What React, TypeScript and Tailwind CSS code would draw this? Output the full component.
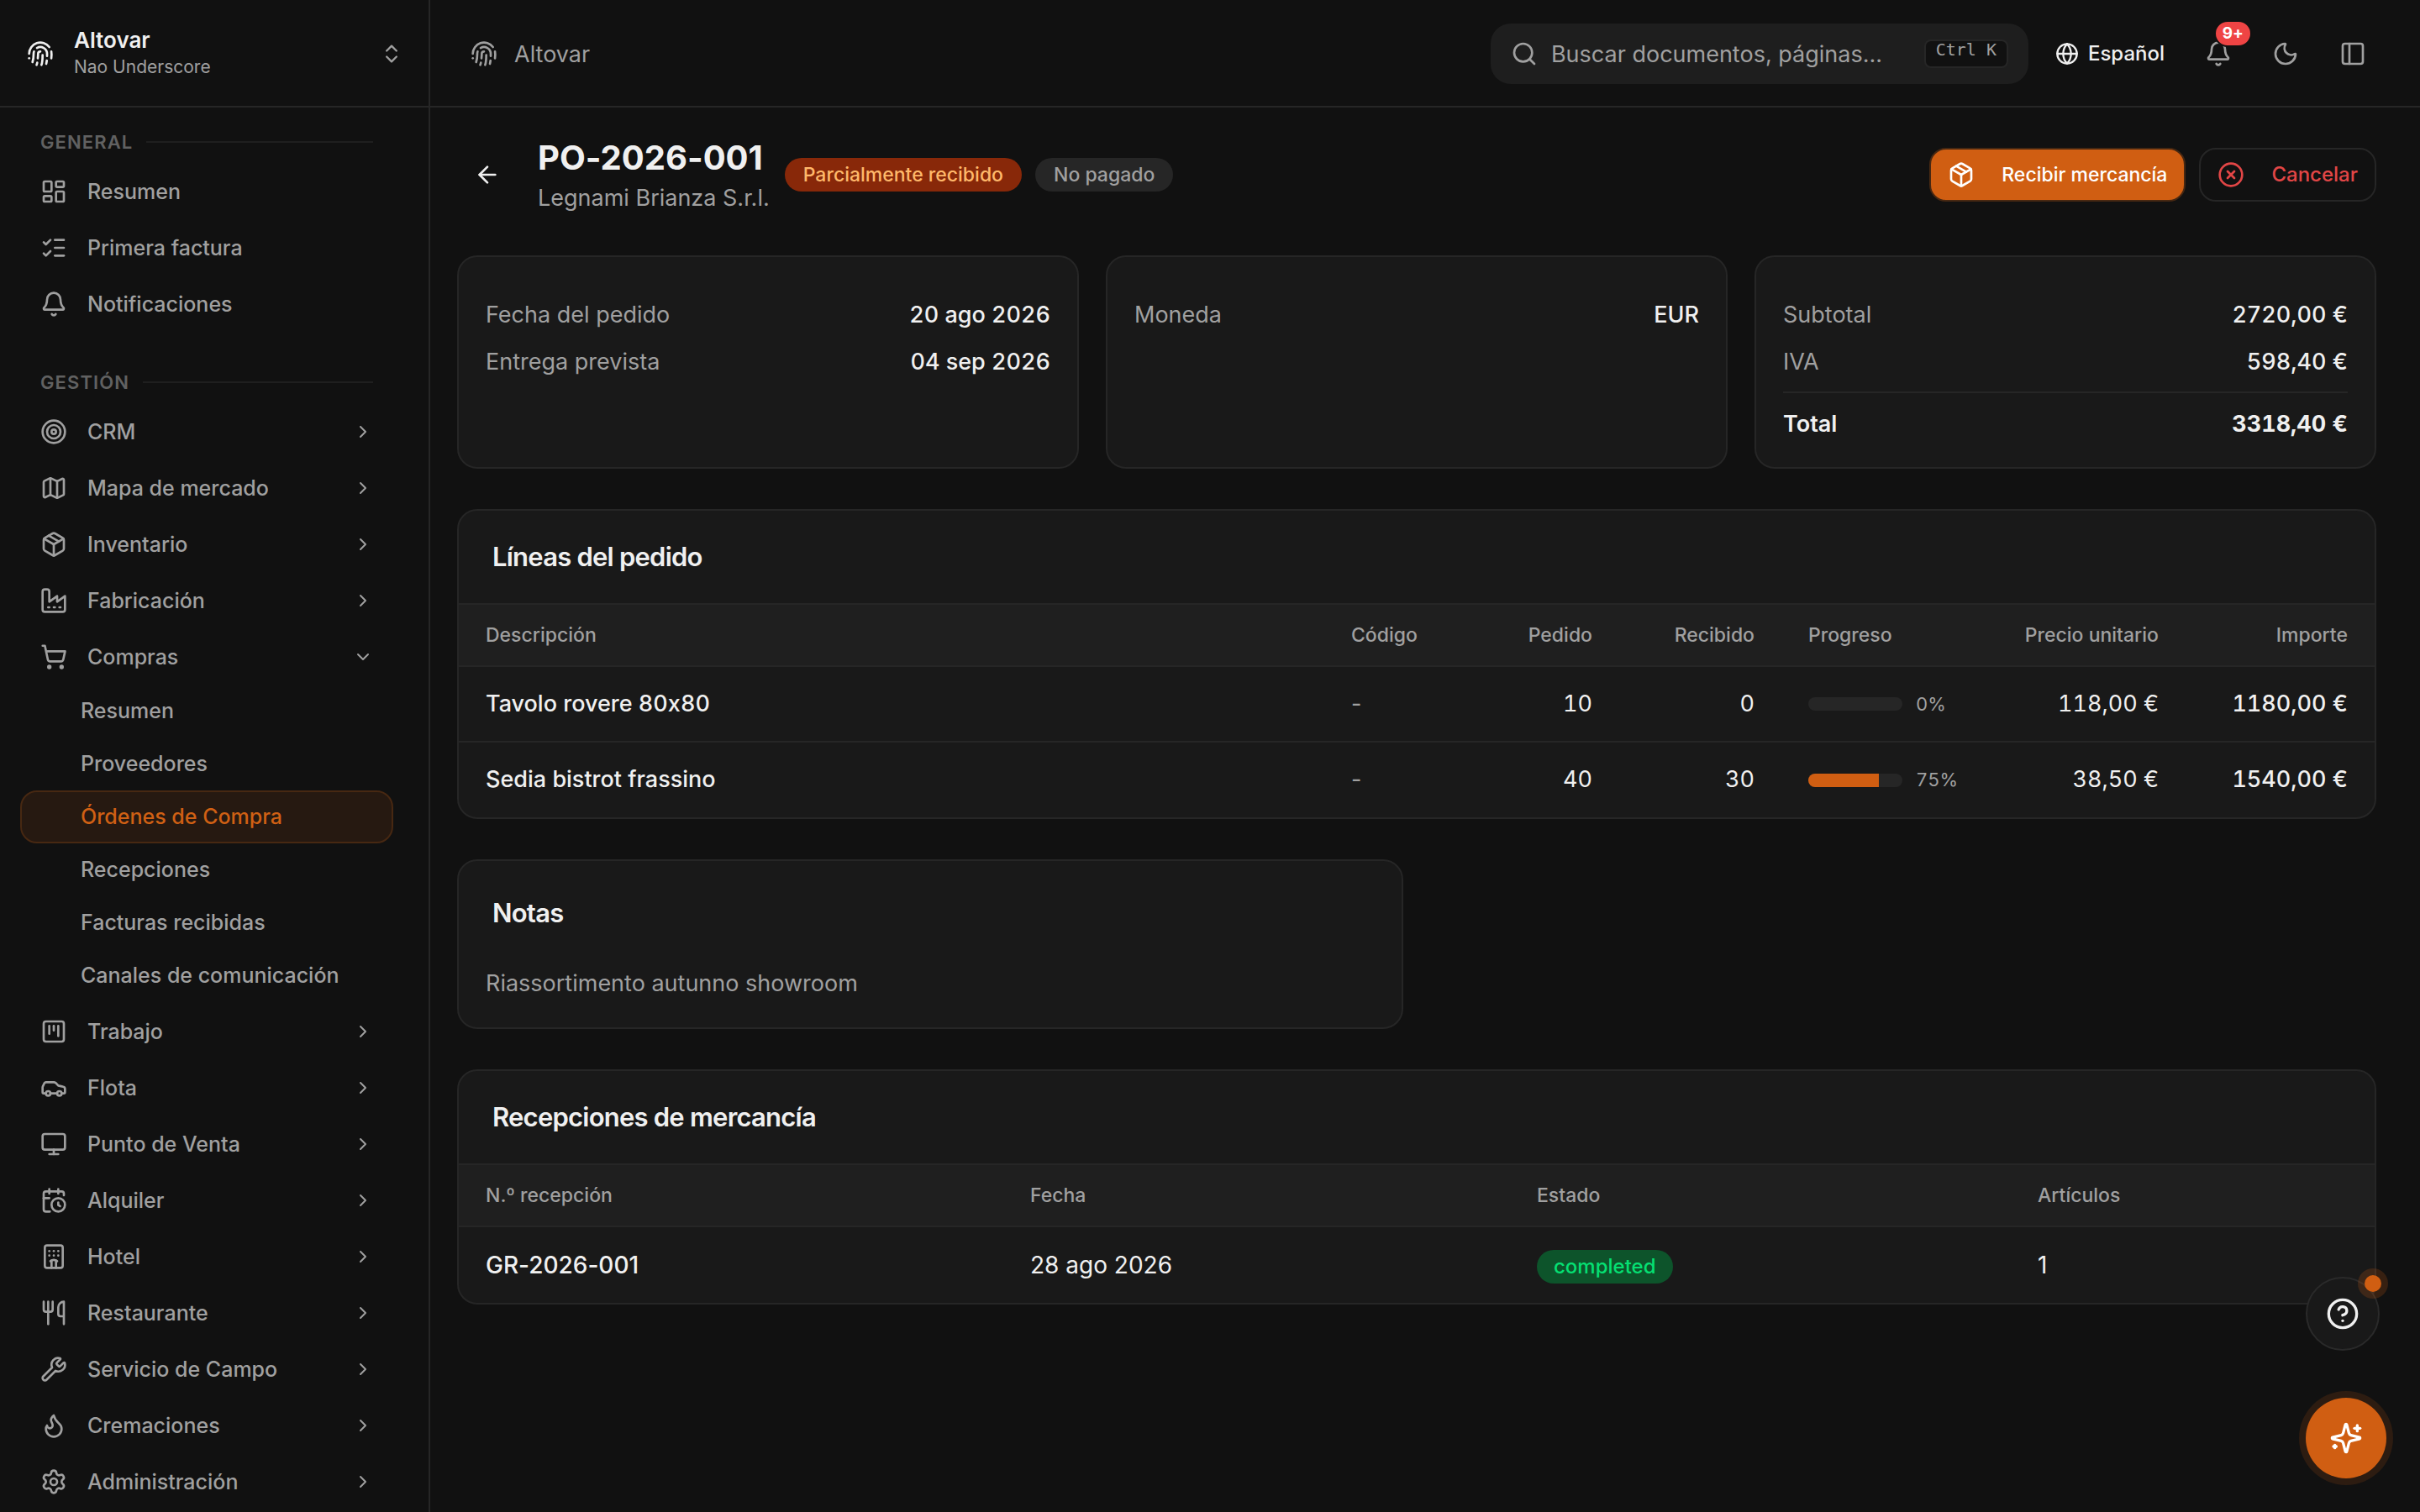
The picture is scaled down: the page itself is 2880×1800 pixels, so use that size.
import type { ReactNode } from "react";
import {
  ArrowLeft,
  Bell,
  CalendarClock,
  Car,
  ChevronDown,
  ChevronRight,
  ChevronsUpDown,
  CircleHelp,
  CircleX,
  Flame,
  Globe,
  Hotel,
  LayoutDashboard,
  ListChecks,
  Map,
  Monitor,
  Moon,
  Package,
  PanelLeft,
  Search,
  Settings,
  ShoppingCart,
  SquareKanban,
  Target,
  Utensils,
  Wrench,
} from "lucide-react";

type Icon = (props: { className?: string }) => ReactNode;

interface NavEntry {
  label: string;
  icon: Icon | typeof Bell;
  expandable?: boolean;
  children?: string[];
}

function Glyph({
  children,
  className,
}: {
  children: ReactNode;
  className?: string;
}) {
  return (
    <svg
      viewBox="0 0 24 24"
      fill="none"
      stroke="currentColor"
      strokeWidth="2"
      strokeLinecap="round"
      strokeLinejoin="round"
      className={className}
      aria-hidden="true"
    >
      {children}
    </svg>
  );
}

function Fingerprint({ className }: { className?: string }) {
  return (
    <Glyph className={className}>
      <path d="M12 10a2 2 0 0 0-2 2c0 1.02-.1 2.51-.26 4" />
      <path d="M14 13.12c0 2.38 0 6.38-1 8.88" />
      <path d="M17.29 21.02c.12-.6.43-2.3.5-3.02" />
      <path d="M2 12a10 10 0 0 1 18-6" />
      <path d="M2 16h.01" />
      <path d="M21.8 16c.2-2 .131-5.354 0-6" />
      <path d="M5 19.5C5.5 18 6 15 6 12a6 6 0 0 1 .34-2" />
      <path d="M8.65 22c.21-.66.45-1.32.57-2" />
      <path d="M9 6.8a6 6 0 0 1 9 5.2v2" />
    </Glyph>
  );
}

function Factory({ className }: { className?: string }) {
  return (
    <Glyph className={className}>
      <path d="M2 20a2 2 0 0 0 2 2h16a2 2 0 0 0 2-2V8l-7 5V8l-7 5V4a2 2 0 0 0-2-2H4a2 2 0 0 0-2 2Z" />
      <path d="M17 18h1" />
      <path d="M12 18h1" />
      <path d="M7 18h1" />
    </Glyph>
  );
}

function Sparkles({ className }: { className?: string }) {
  return (
    <Glyph className={className}>
      <path d="M9.937 15.5A2 2 0 0 0 8.5 14.063l-6.135-1.582a.5.5 0 0 1 0-.962L8.5 9.936A2 2 0 0 0 9.937 8.5l1.582-6.135a.5.5 0 0 1 .963 0L14.063 8.5A2 2 0 0 0 15.5 9.937l6.135 1.581a.5.5 0 0 1 0 .964L15.5 14.063a2 2 0 0 0-1.437 1.437l-1.582 6.135a.5.5 0 0 1-.963 0z" />
      <path d="M20 3v4" />
      <path d="M22 5h-4" />
      <path d="M4 17v2" />
      <path d="M5 18H3" />
    </Glyph>
  );
}

const GENERAL: NavEntry[] = [
  { label: "Resumen", icon: LayoutDashboard },
  { label: "Primera factura", icon: ListChecks },
  { label: "Notificaciones", icon: Bell },
];

const MANAGEMENT: NavEntry[] = [
  { label: "CRM", icon: Target, expandable: true },
  { label: "Mapa de mercado", icon: Map, expandable: true },
  { label: "Inventario", icon: Package, expandable: true },
  { label: "Fabricación", icon: Factory, expandable: true },
  {
    label: "Compras",
    icon: ShoppingCart,
    expandable: true,
    children: [
      "Resumen",
      "Proveedores",
      "Órdenes de Compra",
      "Recepciones",
      "Facturas recibidas",
      "Canales de comunicación",
    ],
  },
  { label: "Trabajo", icon: SquareKanban, expandable: true },
  { label: "Flota", icon: Car, expandable: true },
  { label: "Punto de Venta", icon: Monitor, expandable: true },
  { label: "Alquiler", icon: CalendarClock, expandable: true },
  { label: "Hotel", icon: Hotel, expandable: true },
  { label: "Restaurante", icon: Utensils, expandable: true },
  { label: "Servicio de Campo", icon: Wrench, expandable: true },
  { label: "Cremaciones", icon: Flame, expandable: true },
  { label: "Administración", icon: Settings, expandable: true },
];

const ACTIVE_CHILD = "Órdenes de Compra";

const LINES = [
  {
    description: "Tavolo rovere 80x80",
    ordered: 10,
    received: 0,
    price: "118,00 €",
    amount: "1180,00 €",
  },
  {
    description: "Sedia bistrot frassino",
    ordered: 40,
    received: 30,
    price: "38,50 €",
    amount: "1540,00 €",
  },
];

function NavSection({ title, items }: { title: string; items: NavEntry[] }) {
  return (
    <section>
      <div className="flex h-[50px] items-center gap-4 px-6">
        <h2 className="text-[22px] font-semibold tracking-wider text-[#616161]">
          {title}
        </h2>
        <span className="h-0.5 flex-1 bg-[#1f1f1f]" />
      </div>
      <ul>
        {items.map((item) => (
          <NavItem key={item.label} item={item} />
        ))}
      </ul>
    </section>
  );
}

function NavItem({ item }: { item: NavEntry }) {
  const ItemIcon = item.icon;
  const Chevron = item.children ? ChevronDown : ChevronRight;

  return (
    <li>
      <a
        href="#"
        className="flex h-[67px] items-center gap-6 px-6 text-[25px] font-medium text-[#a0a0a0]"
      >
        <ItemIcon className="size-8 shrink-0" />
        <span className="flex-1 pt-0.5">{item.label}</span>
        {item.expandable && <Chevron className="size-6 shrink-0" />}
      </a>
      {item.children && (
        <ul className="pb-px">
          {item.children.map((child) => (
            <li key={child}>
              <a
                href="#"
                className={
                  child === ACTIVE_CHILD
                    ? "flex h-[63px] items-center rounded-[20px] border-2 border-[#472812] bg-[#261911] pl-[70px] text-[25px] font-medium text-[#d06014]"
                    : "flex h-[63px] items-center pl-[72px] text-[25px] font-medium text-[#a0a0a0]"
                }
              >
                {child}
              </a>
            </li>
          ))}
        </ul>
      )}
    </li>
  );
}

function Sidebar() {
  return (
    <aside className="flex h-full w-[512px] shrink-0 flex-col border-r-2 border-[#262626]">
      <button
        type="button"
        className="flex h-32 shrink-0 items-center gap-6 border-b-2 border-[#262626] pt-0.5 pl-8 pr-[30px] text-left"
      >
        <Fingerprint className="size-8 text-[#f0f0f0]" />
        <span className="flex-1">
          <span className="block text-[26px] leading-8 font-semibold text-[#f0f0f0]">
            Altovar
          </span>
          <span className="block text-[21px] leading-8 text-[#a0a0a0]">
            Nao Underscore
          </span>
        </span>
        <ChevronsUpDown className="size-7 text-[#a0a0a0]" />
      </button>
      <nav className="flex min-h-0 flex-1 flex-col gap-[35px] overflow-hidden pt-4 pl-6 pr-[42px]">
        <NavSection title="GENERAL" items={GENERAL} />
        <NavSection title="GESTIÓN" items={MANAGEMENT} />
      </nav>
    </aside>
  );
}

function TopBar() {
  return (
    <header className="flex h-32 shrink-0 items-center border-b-2 border-[#262626] px-12 pt-0.5 text-[#a0a0a0]">
      <Fingerprint className="size-8" />
      <span className="ml-5 pt-0.5 text-[27px]">Altovar</span>

      <label className="ml-auto flex h-[72px] w-[640px] items-center gap-4 rounded-3xl bg-[#1e1e1e] px-6">
        <Search className="size-8 shrink-0" />
        <input
          type="text"
          aria-label="Buscar"
          placeholder="Buscar documentos, páginas..."
          className="min-w-0 flex-1 bg-transparent pt-0.5 text-[27px] outline-none placeholder:text-[#a0a0a0]"
        />
        <kbd className="h-[34px] shrink-0 rounded-lg border-2 border-[#262626] bg-[#111111] px-3 font-['DejaVu_Sans_Mono',monospace] text-[20px] leading-5">
          Ctrl K
        </kbd>
      </label>

      <button
        type="button"
        className="ml-8 flex items-center gap-[11px] text-[24px] font-medium text-[#f0f0f0]"
      >
        <Globe className="size-7" />
        Español
      </button>

      <div className="ml-8 flex items-center gap-4">
        <button
          type="button"
          aria-label="Notificaciones"
          className="relative flex size-16 items-center justify-center"
        >
          <Bell className="size-8" />
          <span className="absolute -top-2 -right-2 flex h-8 items-center rounded-full border-2 border-[#111111] bg-[#ef4444] px-2 text-[19px] font-bold text-white">
            9+
          </span>
        </button>
        <button
          type="button"
          aria-label="Tema oscuro"
          className="flex size-16 items-center justify-center"
        >
          <Moon className="size-8" />
        </button>
        <button
          type="button"
          aria-label="Panel lateral"
          className="flex size-16 items-center justify-center"
        >
          <PanelLeft className="size-8" />
        </button>
      </div>
    </header>
  );
}

function PageHeader() {
  return (
    <div className="flex items-center">
      <button
        type="button"
        aria-label="Volver"
        className="flex size-[72px] items-center justify-center text-[#f0f0f0]"
      >
        <ArrowLeft className="size-8" />
      </button>
      <div className="ml-6">
        <h1 className="text-[40px] leading-[56px] font-bold text-[#f0f0f0]">
          PO-2026-001
        </h1>
        <p className="text-[27px] leading-10 text-[#a0a0a0]">
          Legnami Brianza S.r.l.
        </p>
      </div>
      <span className="ml-[18px] flex h-10 items-center rounded-full bg-[#882809] px-[22px] text-[23px] font-medium text-[#ffb86a]">
        Parcialmente recibido
      </span>
      <span className="ml-4 flex h-10 items-center rounded-full bg-[#262626] px-[22px] text-[23px] font-medium text-[#a0a0a0]">
        No pagado
      </span>
      <div className="ml-auto flex gap-4">
        <button
          type="button"
          className="flex h-16 items-center gap-8 rounded-[20px] border-2 border-[#472812] bg-[#d05e12] px-5 text-[23px] font-medium text-white"
        >
          <Package className="size-8" />
          Recibir mercancía
        </button>
        <button
          type="button"
          className="flex h-16 items-center gap-8 rounded-[20px] border-2 border-[#262626] px-5 text-[24px] font-medium text-[#e24646]"
        >
          <CircleX className="size-8" />
          Cancelar
        </button>
      </div>
    </div>
  );
}

function Card({
  children,
  className = "",
}: {
  children: ReactNode;
  className?: string;
}) {
  return (
    <section
      className={`overflow-hidden rounded-3xl border-2 border-[#262626] bg-[#191919] ${className}`}
    >
      {children}
    </section>
  );
}

function SummaryRow({ label, value }: { label: string; value: string }) {
  return (
    <div className="flex items-center justify-between pt-0.5 leading-[38px]">
      <dt className="text-[#a0a0a0]">{label}</dt>
      <dd className="font-medium text-[#f0f0f0] tabular-nums">{value}</dd>
    </div>
  );
}

function Summary() {
  return (
    <div className="grid grid-cols-3 gap-8 text-[27px]">
      <Card className="px-8 pt-12 pb-8">
        <dl className="flex flex-col gap-4">
          <SummaryRow label="Fecha del pedido" value="20 ago 2026" />
          <SummaryRow label="Entrega prevista" value="04 sep 2026" />
        </dl>
      </Card>
      <Card className="px-8 pt-12 pb-8">
        <dl>
          <SummaryRow label="Moneda" value="EUR" />
        </dl>
      </Card>
      <Card className="px-8 pt-12 pb-8">
        <dl className="flex flex-col gap-4">
          <SummaryRow label="Subtotal" value="2720,00 €" />
          <SummaryRow label="IVA" value="598,40 €" />
          <div className="flex items-center justify-between border-t-2 border-[#262626] pt-[18px] leading-[38px] text-[#f0f0f0]">
            <dt className="font-semibold">Total</dt>
            <dd className="font-bold tabular-nums">3318,40 €</dd>
          </div>
        </dl>
      </Card>
    </div>
  );
}

function TableTitle({ children }: { children: ReactNode }) {
  return (
    <h2 className="flex h-28 items-center border-b-2 border-[#262626] px-10 text-[31px] font-semibold tracking-tight text-[#f0f0f0]">
      {children}
    </h2>
  );
}

function OrderLines() {
  return (
    <Card>
      <TableTitle>Líneas del pedido</TableTitle>
      <table className="w-full table-fixed text-left text-[#f0f0f0]">
        <thead className="border-b-2 border-[#262626] bg-[#1f1f1f] text-[23px] text-[#a0a0a0]">
          <tr className="h-[73px] *:px-8 *:font-medium">
            <th>Descripción</th>
            <th className="w-[175px]">Código</th>
            <th className="w-[176px] text-right">Pedido</th>
            <th className="w-[193px] text-right">Recibido</th>
            <th className="w-[240px]">Progreso</th>
            <th className="w-[241px] text-right">Precio unitario</th>
            <th className="w-[225px] text-right">Importe</th>
          </tr>
        </thead>
        <tbody className="divide-y-2 divide-[#262626] text-[27px] tabular-nums">
          {LINES.map((line) => {
            const progress = (line.received / line.ordered) * 100;
            return (
              <tr key={line.description} className="h-[90px] *:px-8">
                <td className="font-medium">{line.description}</td>
                <td className="proportional-nums text-[#a0a0a0]">-</td>
                <td className="text-right">{line.ordered}</td>
                <td className="text-right">{line.received}</td>
                <td>
                  <div className="flex items-center gap-4">
                    <div className="h-4 w-28 shrink-0 overflow-hidden rounded-full bg-[#262626]">
                      <div
                        className="h-full bg-[#d05e12]"
                        style={{ width: `${progress}%` }}
                      />
                    </div>
                    <span className="text-[22px] text-[#a0a0a0]">
                      {progress}%
                    </span>
                  </div>
                </td>
                <td className="text-right">{line.price}</td>
                <td className="text-right font-medium">{line.amount}</td>
              </tr>
            );
          })}
        </tbody>
      </table>
    </Card>
  );
}

function Receipts() {
  return (
    <Card>
      <TableTitle>Recepciones de mercancía</TableTitle>
      <table className="w-full table-fixed text-left text-[#f0f0f0]">
        <thead className="border-b-2 border-[#262626] bg-[#1f1f1f] text-[23px] text-[#a0a0a0]">
          <tr className="h-[73px] *:px-8 *:font-medium">
            <th>N.º recepción</th>
            <th className="w-[603px]">Fecha</th>
            <th className="w-[596px]">Estado</th>
            <th className="w-[433px]">Artículos</th>
          </tr>
        </thead>
        <tbody className="text-[28px]">
          <tr className="h-[91px] *:px-8">
            <td className="font-medium">GR-2026-001</td>
            <td>28 ago 2026</td>
            <td>
              <span className="inline-flex h-10 items-center rounded-full bg-[#0d542b] px-5 align-middle text-[24px] font-medium text-[#05df72]">
                completed
              </span>
            </td>
            <td>1</td>
          </tr>
        </tbody>
      </table>
    </Card>
  );
}

function FloatingActions() {
  return (
    <div className="fixed right-10 bottom-10 flex flex-col items-start gap-14">
      <button
        type="button"
        aria-label="Ayuda"
        className="relative flex size-[88px] items-center justify-center rounded-full border-2 border-[#2a2a2a] bg-[#191919] text-[#f0f0f0]"
      >
        <CircleHelp className="size-10" />
        <span className="absolute -top-1 -right-1 size-5 rounded-full bg-[#d05e12] ring-8 ring-[#d05e12]/20" />
      </button>
      <button
        type="button"
        aria-label="Asistente"
        className="flex size-24 items-center justify-center rounded-full bg-[#d05e12] text-white ring-8 ring-[#d05e12]/15"
      >
        <Sparkles className="size-10" />
      </button>
    </div>
  );
}

export default function App() {
  return (
    <div className="flex h-screen overflow-hidden bg-[#111111] font-['Inter','Liberation_Sans',sans-serif] [font-feature-settings:'calt'_0]">
      <Sidebar />
      <div className="flex min-w-0 flex-1 flex-col">
        <TopBar />
        <main className="flex flex-1 flex-col gap-12 overflow-hidden pt-8 pl-8 pr-[52px]">
          <PageHeader />
          <Summary />
          <OrderLines />
          <div className="grid grid-cols-2 gap-8">
            <Card className="px-8 pt-[42px] pb-8">
              <h2 className="pl-2 text-[31px] leading-10 font-semibold tracking-tight text-[#f0f0f0]">
                Notas
              </h2>
              <p className="mt-11 text-[27px] leading-10 text-[#a0a0a0]">
                Riassortimento autunno showroom
              </p>
            </Card>
          </div>
          <Receipts />
        </main>
      </div>
      <FloatingActions />
    </div>
  );
}
